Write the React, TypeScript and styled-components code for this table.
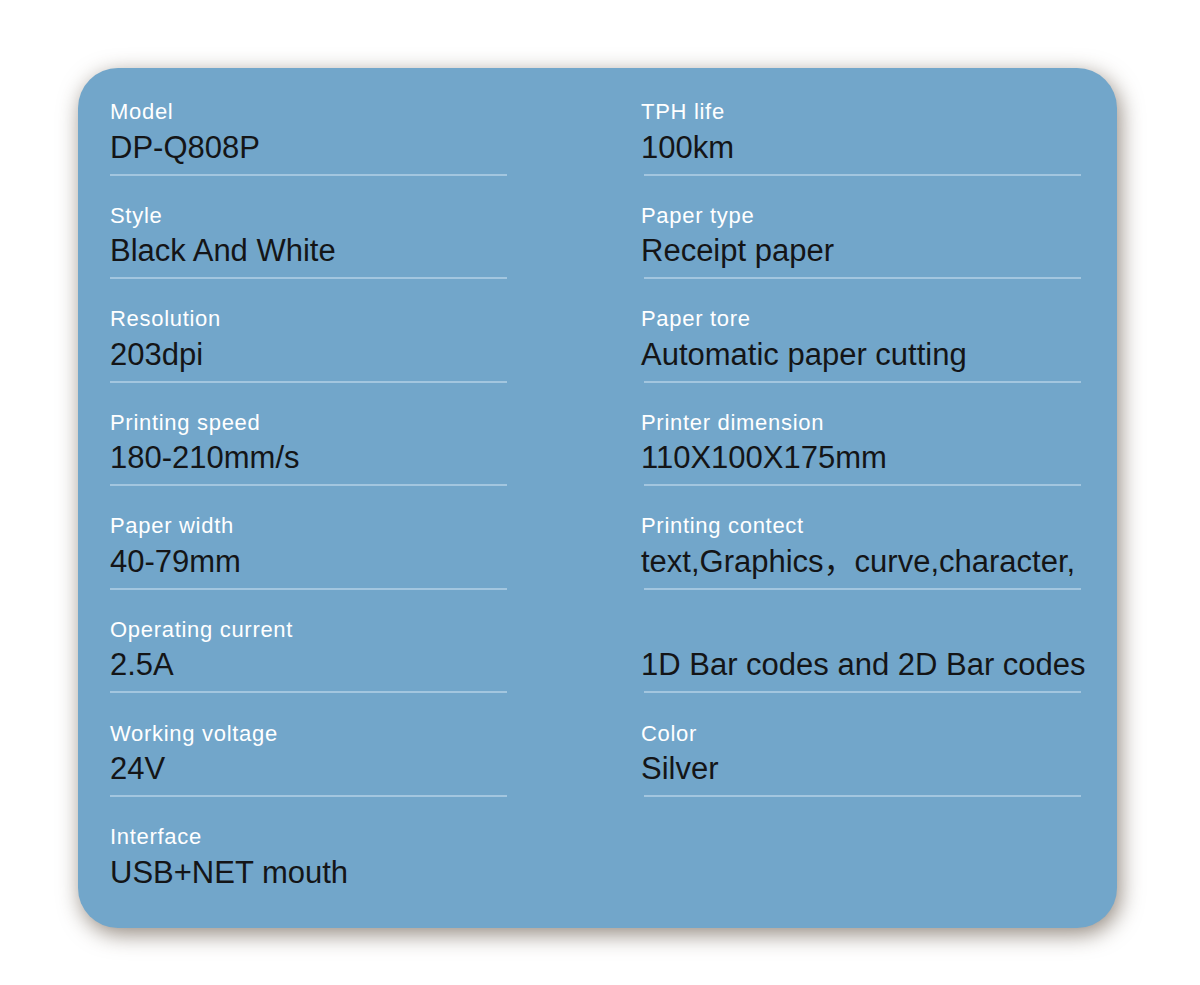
import React from 'react';
import styled, { createGlobalStyle } from 'styled-components';

interface Spec {
  label: string;
  value: string;
}

const GlobalStyle = createGlobalStyle`
  html, body {
    margin: 0;
    padding: 0;
    background: #ffffff;
    font-family: 'Liberation Sans', Arial, 'Noto Sans CJK SC', sans-serif;
  }
`;

const Page = styled('div')`
  padding: 68px 0 57px 78px;
`;

const Card = styled('div')`
  width: 1039px;
  box-sizing: border-box;
  padding: 31px 36px 38px 32px;
  border-radius: 40px;
  background: #72a6ca;
  box-shadow: 3px 6px 22px rgba(75, 58, 42, 0.6);
  display: flex;
  gap: 134px;
`;

const Column = styled('div')<{ $width: number }>`
  display: flex;
  flex-direction: column;
  width: ${(p) => p.$width}px;
`;

const Item = styled('div')`
  margin-bottom: 27.1px;

  &:last-child {
    margin-bottom: 0;
  }
`;

const Label = styled('div')`
  font-size: 22px;
  line-height: 25px;
  height: 25px;
  letter-spacing: 0.7px;
  color: #ffffff;
  white-space: nowrap;
`;

const Value = styled('div')`
  margin-top: 6.5px;
  font-size: 31px;
  line-height: 34px;
  color: #141517;
  white-space: nowrap;
`;

const Rule = styled('div')<{ $inset: number }>`
  margin-top: 9px;
  margin-left: ${(p) => p.$inset}px;
  height: 2px;
  background: #a3c6df;
`;

const left: Spec[] = [
  { label: 'Model', value: 'DP-Q808P' },
  { label: 'Style', value: 'Black And White' },
  { label: 'Resolution', value: '203dpi' },
  { label: 'Printing speed', value: '180-210mm/s' },
  { label: 'Paper width', value: '40-79mm' },
  { label: 'Operating current', value: '2.5A' },
  { label: 'Working voltage', value: '24V' },
  { label: 'Interface', value: 'USB+NET mouth' },
];

const right: Spec[] = [
  { label: 'TPH life', value: '100km' },
  { label: 'Paper type', value: 'Receipt paper' },
  { label: 'Paper tore', value: 'Automatic paper cutting' },
  { label: 'Printer dimension', value: '110X100X175mm' },
  { label: 'Printing contect', value: 'text,Graphics，curve,character,' },
  { label: '', value: '1D Bar codes and 2D Bar codes' },
  { label: 'Color', value: 'Silver' },
];

const SpecColumn: React.FC<{ specs: Spec[]; width: number; inset: number; ruleLast: boolean }> = ({
  specs,
  width,
  inset,
  ruleLast,
}) => (
  <Column $width={width}>
    {specs.map((s, i) => (
      <Item key={i}>
        <Label>{s.label}</Label>
        <Value>{s.value}</Value>
        {(ruleLast || i < specs.length - 1) && <Rule $inset={inset} />}
      </Item>
    ))}
  </Column>
);

const App: React.FC = () => {
  return (
    <>
      <GlobalStyle />
      <Page>
        <Card>
          <SpecColumn specs={left} width={397} inset={0} ruleLast={false} />
          <SpecColumn specs={right} width={440} inset={3} ruleLast={true} />
        </Card>
      </Page>
    </>
  );
};

export default App;
